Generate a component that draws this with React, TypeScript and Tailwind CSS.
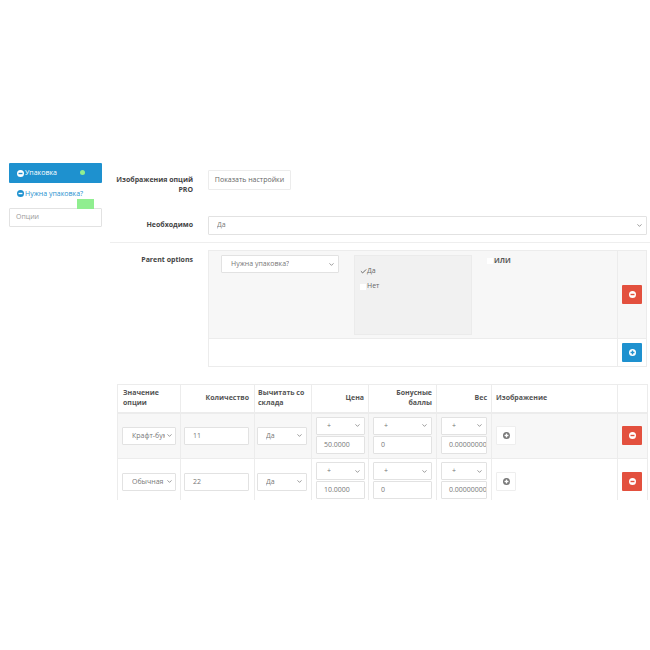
import { ChevronDown, Check } from "lucide-react";

function Select({ value, className }: { value: string; className: string }) {
  return (
    <div className={`flex items-center justify-between bg-white border border-[#e2e2e2] rounded-[1px] text-[#777] ${className}`}>
      <span className="whitespace-nowrap overflow-hidden">{value}</span>
      <ChevronDown size={7} strokeWidth={2} className="shrink-0 text-[#555]" />
    </div>
  );
}

function Field({ value, className }: { value: string; className: string }) {
  return (
    <div className={`flex items-center bg-white border border-[#e2e2e2] rounded-[1px] text-[#777] whitespace-nowrap overflow-hidden ${className}`}>
      {value}
    </div>
  );
}

function RoundIcon({ kind, color, inner }: { kind: "minus" | "plus"; color: string; inner: string }) {
  return (
    <svg width="7" height="7" viewBox="0 0 10 10" className="shrink-0">
      <circle cx="5" cy="5" r="5" fill={color} />
      <rect x="2.2" y="4" width="5.6" height="2" fill={inner} />
      {kind === "plus" && <rect x="4" y="2.2" width="2" height="5.6" fill={inner} />}
    </svg>
  );
}

function ActionButton({ kind }: { kind: "minus" | "plus" }) {
  return (
    <div className={`w-[20px] h-[19px] rounded-[1px] flex items-center justify-center ${kind === "minus" ? "bg-[#e3503e]" : "bg-[#1e91cf]"}`}>
      <RoundIcon kind={kind} color="#fff" inner={kind === "minus" ? "#e3503e" : "#1e91cf"} />
    </div>
  );
}

function PriceCell({ value, inputWidth }: { value: string; inputWidth: string }) {
  return (
    <td className="border border-[#ececec] px-[4px] align-top pt-[3px]">
      <div className={`flex flex-col ${inputWidth}`}>
        <Select value="+" className="h-[18px] pl-[10px] pr-[3px] mb-[1px]" />
        <Field value={value} className="h-[18px] pl-[7px]" />
      </div>
    </td>
  );
}

const rows = [
  { name: "Крафт-бумага", qty: "11", price: "50.0000", bg: "bg-[#f7f7f7]" },
  { name: "Обычная (белая)", qty: "22", price: "10.0000", bg: "bg-white" },
];

export default function App() {
  return (
    <div className="w-[650px] h-[650px] bg-white pt-[163px] text-[7px] text-[#666]" style={{ fontFamily: '"Open Sans", sans-serif' }}>
      <div className="flex h-[337px] overflow-hidden">
        {/* левая колонка */}
        <div className="relative ml-[9px] w-[93px] shrink-0">
          <div className="h-[20px] bg-[#1e91cf] rounded-[1px] flex items-center pl-[8px] gap-[1px] text-white">
            <RoundIcon kind="minus" color="#fff" inner="#1e91cf" />
            <span>Упаковка</span>
            <span className="absolute left-[71px] top-[7px] w-[5px] h-[5px] rounded-full bg-[#90ee90]" />
          </div>
          <div className="h-[25px] flex items-start pt-[7px] pl-[8px] gap-[1px] text-[#1e91cf]">
            <RoundIcon kind="minus" color="#1e91cf" inner="#fff" />
            <span className="leading-[8px]">Нужна упаковка?</span>
          </div>
          <div className="absolute left-[68px] top-[36px] w-[17px] h-[10px] bg-[#90ee90]" />
          <Field value="Опции" className="h-[19px] pl-[6px] text-[#999]" />
        </div>

        {/* форма */}
        <div className="ml-[8px] w-[540px] shrink-0">
          <div className="flex pt-[7px] pl-[3px]">
            <div className="w-[80px] text-right font-bold text-[#444] leading-[9.5px] pt-[5px]">Изображения опций PRO</div>
            <div className="ml-[15px] h-[20px] w-[83px] border border-[#ececec] rounded-[1px] flex items-center justify-center">Показать настройки</div>
          </div>
          <div className="flex items-center mt-[22px] pl-[8px]">
            <div className="w-[75px] text-right font-bold text-[#444]">Необходимо</div>
            <Select value="Да" className="ml-[15px] h-[19px] w-[439px] pl-[8px] pr-[3px]" />
          </div>
          <div className="h-px bg-[#eeeeee] mt-[7px]" />

          <div className="flex mt-[7px] pl-[8px]">
            <div className="w-[75px] text-right font-bold text-[#444] pt-[5px]">Parent options</div>
            <div className="ml-[15px] w-[439px] h-[117px] border border-[#ececec] flex flex-col">
              <div className="flex h-[88px] bg-[#f7f7f7] border-b border-[#ececec]">
                <div className="flex-1 flex pl-[12px] pt-[4px] items-start">
                  <Select value="Нужна упаковка?" className="w-[118px] h-[18px] pl-[9px] pr-[3px]" />
                  <div className="ml-[15px] w-[118px] h-[80px] bg-[#f1f1f1] border border-[#ebebeb] pl-[5px] pt-[11px] flex flex-col gap-[6px]">
                    <div className="flex items-center h-[9px]">
                      <Check size={7} strokeWidth={3} className="text-[#555]" />
                      <span>Да</span>
                    </div>
                    <div className="flex items-center h-[9px]">
                      <span className="w-[6px] h-[6px] bg-white mr-[1px]" />
                      <span>Нет</span>
                    </div>
                  </div>
                  <div className="ml-[15px] mt-[1px] flex items-center gap-[1px] font-bold text-[#555]">
                    <span className="w-[6px] h-[6px] bg-white" />
                    <span>ИЛИ</span>
                  </div>
                </div>
                <div className="w-[29px] border-l border-[#ececec] flex items-center justify-center">
                  <ActionButton kind="minus" />
                </div>
              </div>
              <div className="flex flex-1">
                <div className="flex-1" />
                <div className="w-[29px] border-l border-[#ececec] flex items-center justify-center">
                  <ActionButton kind="plus" />
                </div>
              </div>
            </div>
          </div>

          {/* таблица значений */}
          <table className="ml-[7px] mt-[17px] w-[530px] table-fixed border-collapse leading-[10px]">
            <colgroup>
              <col className="w-[63px]" />
              <col className="w-[74px]" />
              <col className="w-[57px]" />
              <col className="w-[57px]" />
              <col className="w-[68px]" />
              <col className="w-[55px]" />
              <col className="w-[126px]" />
              <col className="w-[30px]" />
            </colgroup>
            <thead>
              <tr className="h-[28px] font-bold text-[#555] border-b-2 border-[#ececec]">
                <th className="border border-[#ececec] px-[5px] text-left font-bold">Значение опции</th>
                <th className="border border-[#ececec] px-[5px] text-right font-bold">Количество</th>
                <th className="border border-[#ececec] px-[3px] text-left font-bold">Вычитать со склада</th>
                <th className="border border-[#ececec] px-[4px] text-right font-bold">Цена</th>
                <th className="border border-[#ececec] px-[4px] text-right font-bold">Бонусные баллы</th>
                <th className="border border-[#ececec] px-[4px] text-right font-bold">Вес</th>
                <th className="border border-[#ececec] px-[4px] text-left font-bold">Изображение</th>
                <th className="border border-[#ececec]" />
              </tr>
            </thead>
            <tbody>
              {rows.map((row) => (
                <tr key={row.qty} className={`h-[46px] ${row.bg}`}>
                  <td className="border border-[#ececec] px-[4px]">
                    <Select value={row.name} className="h-[18px] pl-[9px] pr-[2px] gap-[1px]" />
                  </td>
                  <td className="border border-[#ececec] px-[3px]">
                    <Field value={row.qty} className="h-[18px] pl-[8px] w-[65px]" />
                  </td>
                  <td className="border border-[#ececec] px-[2px]">
                    <Select value="Да" className="h-[18px] pl-[8px] pr-[3px] w-[50px]" />
                  </td>
                  <PriceCell value={row.price} inputWidth="w-[49px]" />
                  <PriceCell value="0" inputWidth="w-[59px]" />
                  <PriceCell value="0.00000000" inputWidth="w-[46px]" />
                  <td className="border border-[#ececec] px-[4px]">
                    <div className="w-[20px] h-[19px] border border-[#eeeeee] bg-white rounded-[1px] flex items-center justify-center">
                      <RoundIcon kind="plus" color="#777" inner="#fff" />
                    </div>
                  </td>
                  <td className="border border-[#ececec] px-[4px]">
                    <ActionButton kind="minus" />
                  </td>
                </tr>
              ))}
            </tbody>
          </table>
        </div>
      </div>
    </div>
  );
}
